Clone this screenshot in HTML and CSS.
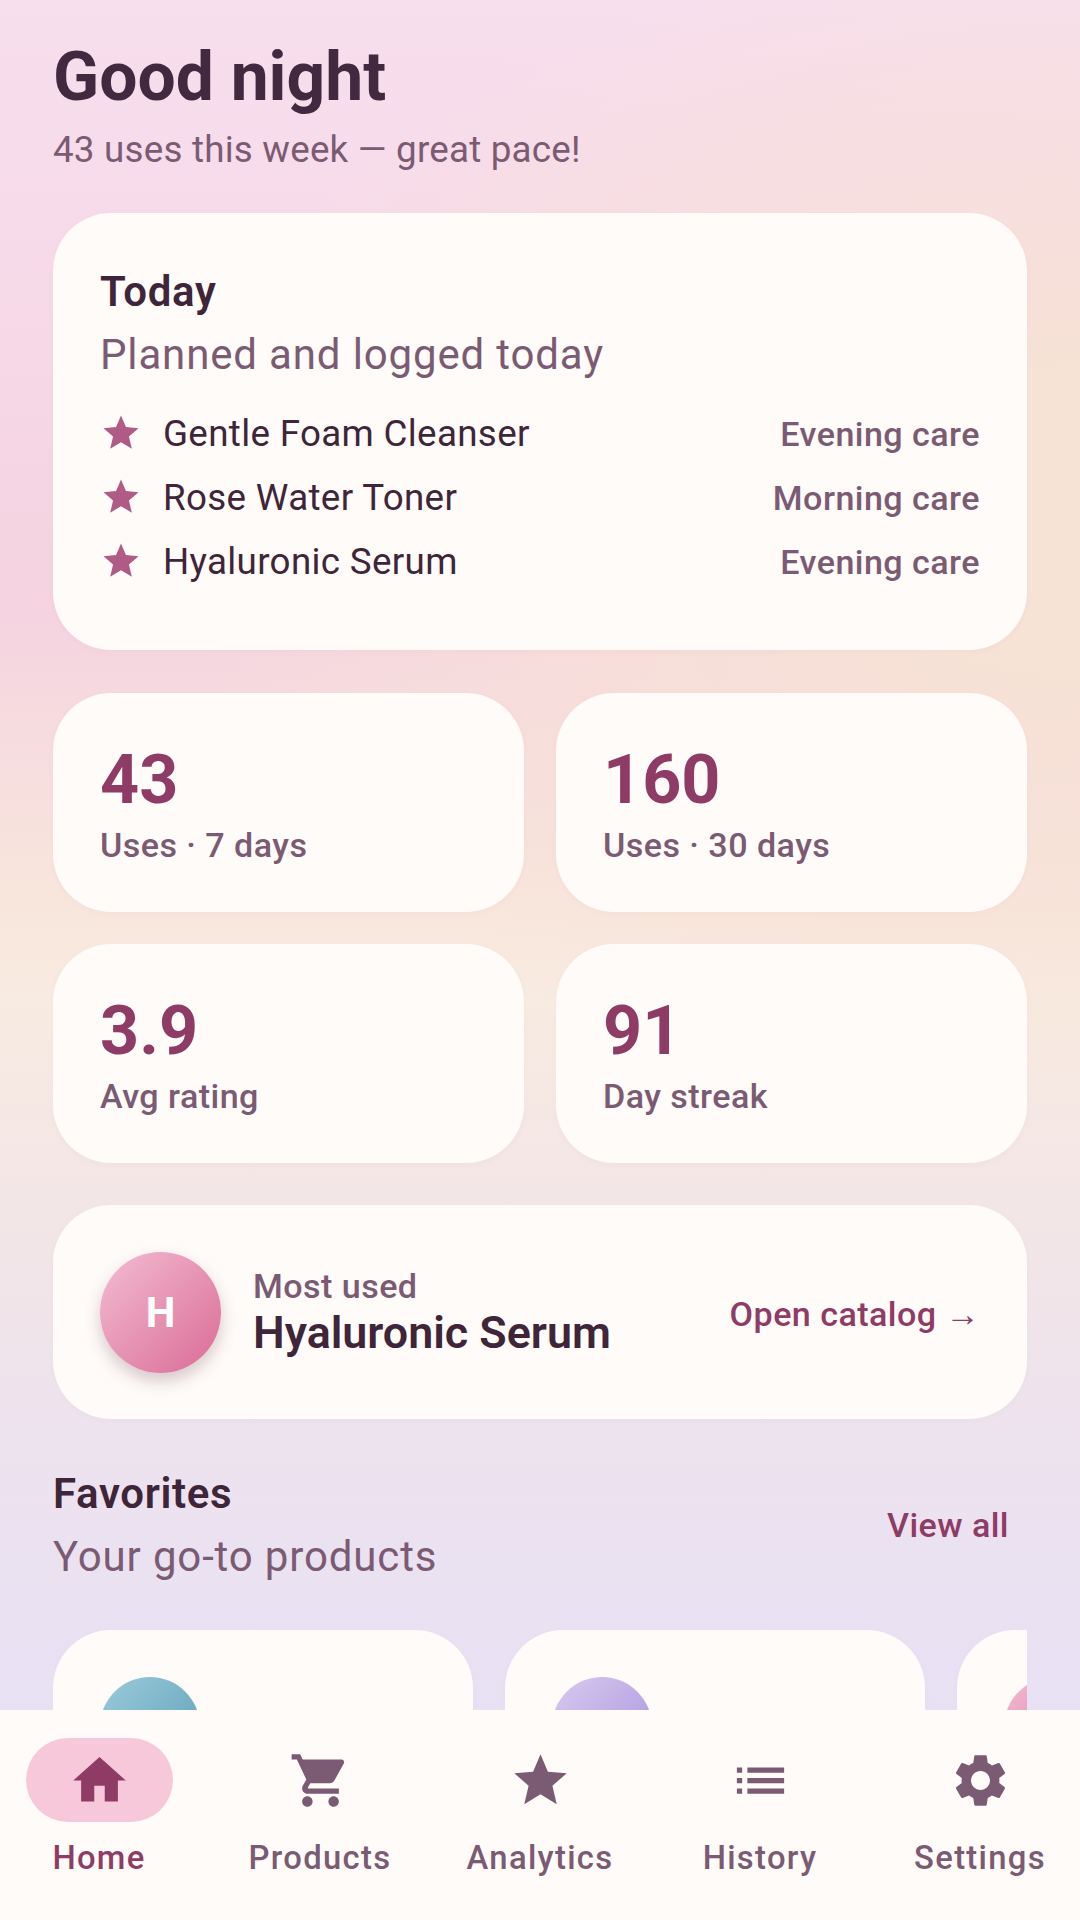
FILE: index.html
```html
<!DOCTYPE html>
<html lang="en">
<head>
<meta charset="UTF-8" />
<title>Good night</title>
<link rel="stylesheet" href="styles.css">
</head>
<body>

<div class="app">
  <main class="content">
    <h1 class="greeting">Good night</h1>
    <p class="greeting-sub">43 uses this week — great pace!</p>

    <section class="card today">
      <div class="card-title">Today</div>
      <div class="card-sub">Planned and logged today</div>
      <ul class="today-list">
        <li class="today-row">
          <svg class="today-star" viewBox="0 0 24 24"><path d="M12 17.27L18.18 21l-1.64-7.03L22 9.24l-7.19-.61L12 2 9.19 8.63 2 9.24l5.46 4.73L5.82 21z"/></svg>
          <span class="today-name">Gentle Foam Cleanser</span>
          <span class="today-tag">Evening care</span>
        </li>
        <li class="today-row">
          <svg class="today-star" viewBox="0 0 24 24"><path d="M12 17.27L18.18 21l-1.64-7.03L22 9.24l-7.19-.61L12 2 9.19 8.63 2 9.24l5.46 4.73L5.82 21z"/></svg>
          <span class="today-name">Rose Water Toner</span>
          <span class="today-tag">Morning care</span>
        </li>
        <li class="today-row">
          <svg class="today-star" viewBox="0 0 24 24"><path d="M12 17.27L18.18 21l-1.64-7.03L22 9.24l-7.19-.61L12 2 9.19 8.63 2 9.24l5.46 4.73L5.82 21z"/></svg>
          <span class="today-name">Hyaluronic Serum</span>
          <span class="today-tag">Evening care</span>
        </li>
      </ul>
    </section>

    <section class="stats">
      <div class="card stat"><div class="stat-num">43</div><div class="stat-label">Uses · 7 days</div></div>
      <div class="card stat"><div class="stat-num">160</div><div class="stat-label">Uses · 30 days</div></div>
      <div class="card stat"><div class="stat-num">3.9</div><div class="stat-label">Avg rating</div></div>
      <div class="card stat"><div class="stat-num">91</div><div class="stat-label">Day streak</div></div>
    </section>

    <section class="card top-product">
      <div class="avatar avatar-big">H</div>
      <div class="top-text">
        <div class="top-label">Most used</div>
        <div class="top-name">Hyaluronic Serum</div>
      </div>
      <div class="top-link">Open catalog →</div>
    </section>

    <section class="fav-head">
      <div>
        <div class="card-title">Favorites</div>
        <div class="card-sub">Your go-to products</div>
      </div>
      <div class="view-all">View all</div>
    </section>

    <section class="fav-row">
      <div class="card fav"><div class="avatar avatar-blue"></div></div>
      <div class="card fav"><div class="avatar avatar-purple"></div></div>
      <div class="card fav"><div class="avatar avatar-pink"></div></div>
    </section>
  </main>

  <nav class="nav">
    <div class="nav-item active">
      <div class="nav-pill"><svg viewBox="0 0 24 24"><path d="M10 20v-6h4v6h5v-8h3L12 3 2 12h3v8z"/></svg></div>
      <span>Home</span>
    </div>
    <div class="nav-item">
      <div class="nav-pill"><svg viewBox="0 0 24 24"><path d="M7 18c-1.1 0-1.99.9-1.99 2S5.9 22 7 22s2-.9 2-2-.9-2-2-2zM1 2v2h2l3.6 7.59-1.35 2.45c-.16.28-.25.61-.25.96 0 1.1.9 2 2 2h12v-2H7.42c-.14 0-.25-.11-.25-.25l.03-.12.9-1.63h7.45c.75 0 1.41-.41 1.75-1.03l3.58-6.49c.08-.14.12-.31.12-.48 0-.55-.45-1-1-1H5.21l-.94-2H1zm16 16c-1.1 0-1.99.9-1.99 2s.89 2 1.99 2 2-.9 2-2-.9-2-2-2z"/></svg></div>
      <span>Products</span>
    </div>
    <div class="nav-item">
      <div class="nav-pill"><svg viewBox="0 0 24 24"><path d="M12 17.27L18.18 21l-1.64-7.03L22 9.24l-7.19-.61L12 2 9.19 8.63 2 9.24l5.46 4.73L5.82 21z"/></svg></div>
      <span>Analytics</span>
    </div>
    <div class="nav-item">
      <div class="nav-pill"><svg viewBox="0 0 24 24"><path d="M3 13h2v-2H3v2zm0 4h2v-2H3v2zm0-8h2V7H3v2zm4 4h14v-2H7v2zm0 4h14v-2H7v2zM7 7v2h14V7H7z"/></svg></div>
      <span>History</span>
    </div>
    <div class="nav-item">
      <div class="nav-pill"><svg viewBox="0 0 24 24"><path d="M19.14 12.94c.04-.3.06-.61.06-.94 0-.32-.02-.64-.07-.94l2.03-1.58c.18-.14.23-.41.12-.61l-1.92-3.32c-.12-.22-.37-.29-.59-.22l-2.39.96c-.5-.38-1.03-.7-1.62-.94l-.36-2.54c-.04-.24-.24-.41-.48-.41h-3.84c-.24 0-.43.17-.47.41l-.36 2.54c-.59.24-1.13.57-1.62.94l-2.39-.96c-.22-.08-.47 0-.59.22L2.74 8.87c-.12.21-.08.47.12.61l2.03 1.58c-.05.3-.09.63-.09.94s.02.64.07.94l-2.03 1.58c-.18.14-.23.41-.12.61l1.92 3.32c.12.22.37.29.59.22l2.39-.96c.5.38 1.03.7 1.62.94l.36 2.54c.05.24.24.41.48.41h3.84c.24 0 .44-.17.47-.41l.36-2.54c.59-.24 1.13-.56 1.62-.94l2.39.96c.22.08.47 0 .59-.22l1.92-3.32c.12-.22.07-.47-.12-.61l-2.01-1.58zM12 15.6c-1.98 0-3.6-1.62-3.6-3.6s1.62-3.6 3.6-3.6 3.6 1.62 3.6 3.6-1.62 3.6-3.6 3.6z"/></svg></div>
      <span>Settings</span>
    </div>
  </nav>
</div>

</body>
</html>
```

FILE: styles.css
```css
* {
  box-sizing: border-box;
}
body {
  margin: 0;
  font-family: Roboto, "Liberation Sans", sans-serif;
  color: #3f2539;
}
.app {
  width: 1080px;
  height: 1920px;
  display: flex;
  flex-direction: column;
  background:
    radial-gradient(ellipse 900px 600px at 100% 520px, #f7e2d6 0%, #f7e2d6 25%, rgba(247, 226, 214, 0) 100%),
    linear-gradient(180deg, #f8dfee 0%, #f5d3e1 31%, #f8e6dc 47%, #f8ebe1 52%, #f3e6e6 62%, #ece2f0 78%, #e8e1f4 89%);
}
.content {
  flex: 1;
  min-height: 0;
  overflow: hidden;
  padding: 30px 53px 0;
}

/* Header */
.greeting {
  margin: 0;
  font-size: 67.75px;
  line-height: 94px;
  font-weight: 700;
  color: #432940;
}
.greeting-sub {
  margin: 0 0 37px;
  font-size: 36.75px;
  line-height: 52px;
  letter-spacing: 0.22px;
  color: #7b5a73;
}

/* Cards */
.card {
  background: #fffbf8;
  border-radius: 58px;
  box-shadow: 0 2px 6px rgba(120, 60, 90, 0.03);
}
.card-title {
  font-size: 42px;
  line-height: 63px;
  font-weight: 600;
  letter-spacing: 0.65px;
}
.card-sub {
  font-size: 42px;
  line-height: 63px;
  letter-spacing: 0.85px;
  color: #7b5a73;
}
.today {
  padding: 47px 47px 57px;
  height: 437px;
}
.today-list {
  list-style: none;
  margin: 15px 0 0;
  padding: 0;
}
.today-row {
  display: flex;
  align-items: center;
  height: 64px;
}
.today-star {
  width: 42px;
  height: 42px;
  fill: #b05a86;
  margin-right: 21px;
}
.today-name {
  flex: 1;
  font-size: 36.75px;
  letter-spacing: 0.33px;
}
.today-tag {
  padding-top: 2px;
  font-size: 34.1px;
  font-weight: 500;
  letter-spacing: 0.45px;
  color: #7b5a73;
}

/* Stats */
.stats {
  margin-top: 43px;
  display: grid;
  grid-template-columns: 1fr 1fr;
  gap: 32.5px 32px;
}
.stat {
  height: 218.5px;
  padding: 48px 47px 0;
}
.stat-num {
  font-size: 68.25px;
  line-height: 78px;
  font-weight: 700;
  color: #8e3b65;
}
.stat-label {
  margin-top: 6px;
  font-size: 34.1px;
  line-height: 40px;
  font-weight: 500;
  letter-spacing: 0.45px;
  color: #7b5a73;
}

/* Most used */
.top-product {
  margin-top: 42.5px;
  height: 214px;
  padding: 0 47px;
  display: flex;
  align-items: center;
}
.avatar {
  border-radius: 50%;
  flex: none;
}
.avatar-big {
  width: 121px;
  height: 121px;
  display: flex;
  align-items: center;
  justify-content: center;
  background: linear-gradient(135deg, #f3bdd2, #da6b96);
  box-shadow: 0 8px 16px rgba(90, 50, 70, 0.25);
  color: #fff;
  font-size: 42px;
  font-weight: 700;
}
.top-text {
  flex: 1;
  margin-left: 32px;
}
.top-label {
  font-size: 34.1px;
  line-height: 38px;
  font-weight: 500;
  letter-spacing: 0.45px;
  color: #7b5a73;
}
.top-name {
  padding-top: 3px;
  font-size: 44.8px;
  line-height: 49px;
  font-weight: 600;
}
.top-link {
  padding-top: 3px;
  font-size: 34.1px;
  font-weight: 500;
  letter-spacing: 0.45px;
  color: #8e3b65;
  white-space: nowrap;
}

/* Favorites */
.fav-head {
  margin-top: 43px;
  display: flex;
  align-items: center;
  justify-content: space-between;
}
.view-all {
  margin-right: 18px;
  font-size: 34.1px;
  font-weight: 500;
  letter-spacing: 0.45px;
  color: #8e3b65;
}
.fav-row {
  margin-top: 42px;
  display: flex;
  gap: 32px;
  overflow: hidden;
}
.fav {
  flex: none;
  width: 420px;
  height: 300px;
  padding: 47px;
}
.avatar-blue,
.avatar-purple,
.avatar-pink {
  width: 100px;
  height: 100px;
}
.avatar-blue {
  background: linear-gradient(135deg, #9ccbdb, #5b9cb5);
}
.avatar-purple {
  background: linear-gradient(135deg, #d8cbef, #a98fdd);
}
.avatar-pink {
  background: linear-gradient(135deg, #f3bdd2, #da6b96);
}

/* Bottom nav */
.nav {
  flex: none;
  height: 210px;
  background: #fffbf8;
  display: flex;
  gap: 20px;
  padding-top: 28px;
}
.nav-item {
  width: 200px;
  display: flex;
  flex-direction: column;
  align-items: center;
  font-size: 32.8px;
  line-height: 42px;
  font-weight: 500;
  letter-spacing: 1.3px;
  color: #7b5a73;
}
.nav-pill {
  width: 147px;
  height: 84px;
  border-radius: 42px;
  display: flex;
  align-items: center;
  justify-content: center;
  margin-bottom: 15px;
}
.nav-pill svg {
  width: 63px;
  height: 63px;
  fill: #7b5a73;
}
.nav-item.active {
  margin-left: -1px;
  margin-right: 1px;
  color: #8e3b65;
}
.active .nav-pill {
  background: #f6c8da;
}
.active .nav-pill svg {
  fill: #8e3b65;
}
```
